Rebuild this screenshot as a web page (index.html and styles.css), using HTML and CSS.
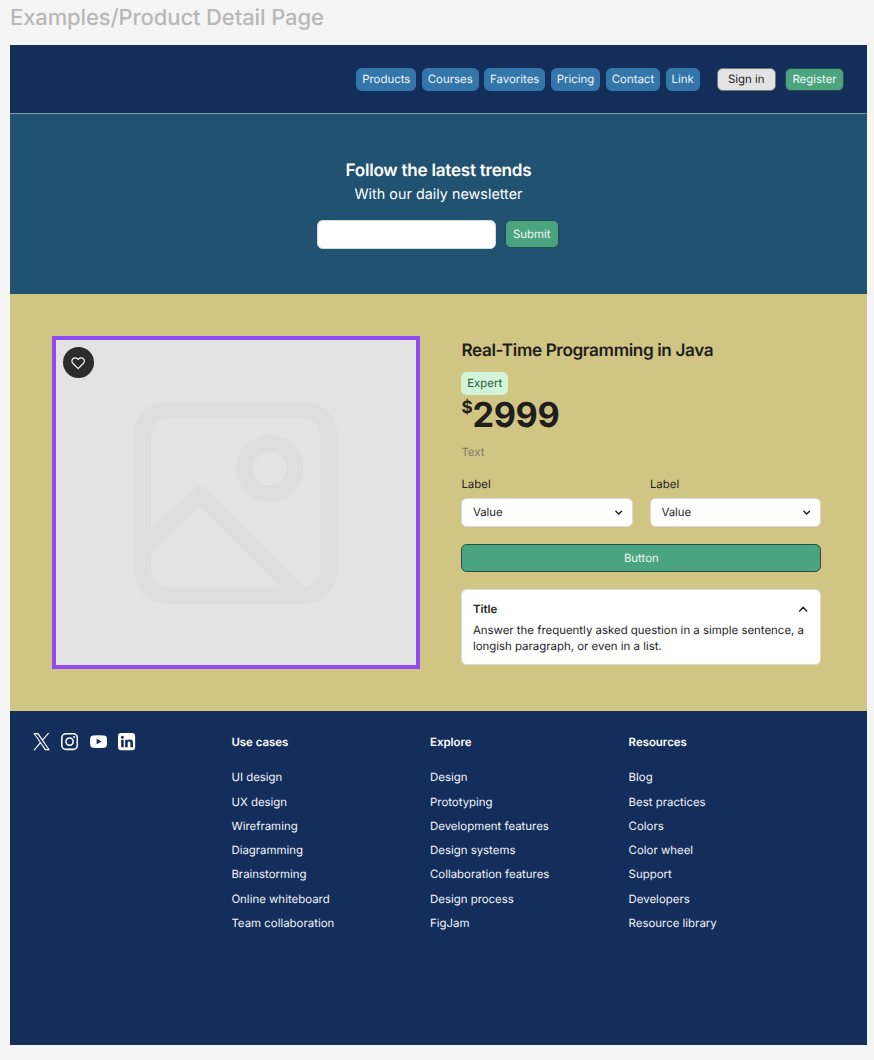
FILE: index.html
```html
<!DOCTYPE html>
<html lang="en">
<head>
<meta charset="utf-8">
<title>Product Detail Page</title>
<link rel="stylesheet" href="styles.css">
</head>
<body>
<div class="frame-name">Examples/Product Detail Page</div>
<div class="page">
  <header class="header">
    <nav class="nav">
      <a class="pill">Products</a><a class="pill">Courses</a><a class="pill">Favorites</a><a class="pill">Pricing</a><a class="pill">Contact</a><a class="pill">Link</a>
    </nav>
    <div class="auth">
      <button class="btn btn-neutral">Sign in</button>
      <button class="btn btn-green">Register</button>
    </div>
  </header>

  <section class="hero">
    <h1 class="hero-title">Follow the latest trends</h1>
    <p class="hero-sub">With our daily newsletter</p>
    <form class="signup">
      <input class="email" type="text" aria-label="Email">
      <button class="btn btn-submit" type="button">Submit</button>
    </form>
  </section>

  <main class="product">
    <div class="photo">
      <svg class="placeholder" viewBox="134 400.7 203.5 203.5" fill="none" stroke="#dedede" stroke-width="17" stroke-linejoin="round">
        <rect x="142.7" y="409.4" width="186" height="186" rx="25"/>
        <circle cx="269.5" cy="468.2" r="25.3"/>
        <path d="M142.7 549.3L199.7 494.2L300.9 595.4"/>
      </svg>
      <div class="like">
        <svg class="heart" viewBox="0 0 24 24" fill="none" stroke="#f5f5f5" stroke-width="2" stroke-linejoin="round" stroke-linecap="round"><path d="M20.84 4.61a5.5 5.5 0 0 0-7.78 0L12 5.67l-1.06-1.06a5.5 5.5 0 0 0-7.78 7.78l1.06 1.06L12 21.23l7.78-7.78 1.06-1.06a5.5 5.5 0 0 0 0-7.78z"/></svg>
      </div>
    </div>
    <div class="details">
      <h2 class="title">Real-Time Programming in Java</h2>
      <span class="tag">Expert</span>
      <div class="price"><span class="currency">$</span><span class="amount">2999</span></div>
      <p class="note">Text</p>
      <div class="fields">
        <div class="field">
          <span class="label">Label</span>
          <div class="select"><span>Value</span><svg class="chevron" viewBox="0 0 16 16"><path d="M4 6l4 4 4-4"/></svg></div>
        </div>
        <div class="field">
          <span class="label">Label</span>
          <div class="select"><span>Value</span><svg class="chevron" viewBox="0 0 16 16"><path d="M4 6l4 4 4-4"/></svg></div>
        </div>
      </div>
      <button class="btn btn-wide">Button</button>
      <div class="accordion">
        <div class="accordion-head"><span>Title</span><svg class="chevron-up" viewBox="0 0 20 20"><path d="M15 12.5l-5-5-5 5"/></svg></div>
        <p class="accordion-text">Answer the frequently asked question in a simple sentence, a<br>longish paragraph, or even in a list.</p>
      </div>
    </div>
  </main>

  <footer class="footer">
    <div class="social">
      <svg class="icon" viewBox="0 0 24 24" fill="#fff"><path d="M14.3 10.200L23 0h-2.100l-7.500 8.800L7.400 0H.4l9.100 13.300L.4 24h2.100l8-9.300L16.800 24h7zM11.500 13.500l-.9-1.300L3.200 1.600h3.200l5.900 8.500.9 1.300 7.700 11.100h-3.200z"/></svg>
      <svg class="icon" viewBox="0 0 24 24" fill="none" stroke="#fff" stroke-width="2.200"><rect x="1.100" y="1.100" width="21.800" height="21.800" rx="5.800"/><circle cx="12" cy="12" r="5.100"/><circle cx="18.400" cy="5.600" r="1.450" fill="#fff" stroke="none"/></svg>
      <svg class="icon" viewBox="0 0 24 24"><path fill="#fff" fill-rule="evenodd" d="M4 3.400Q12 2.900 20 3.400Q23.400 3.600 23.700 7.200Q24.200 12 23.700 16.800Q23.400 20.400 20 20.600Q12 21.100 4 20.600Q.6 20.400.3 16.800Q-.2 12 .3 7.200Q.6 3.600 4 3.400zM9.300 8.200v7.600L16.300 12z"/></svg>
      <svg class="icon" viewBox="0 0 24 24"><rect width="24" height="24" rx="4.500" fill="#fff"/><g fill="#142e5c"><circle cx="6.200" cy="6" r="2.100"/><path d="M4.400 9.300H8V20H4.400zM10 9.300h3.400v1.500c.6-1 1.800-1.800 3.400-1.800 3.400 0 4.200 2.200 4.200 5.200V20h-3.600v-5.200c0-1.400-.2-2.800-1.800-2.800-1.700 0-2 1.300-2 2.700V20H10z"/></g></svg>
    </div>
    <div class="links">
      <h3 class="links-title">Use cases</h3>
      <a>UI design</a><a>UX design</a><a>Wireframing</a><a>Diagramming</a><a>Brainstorming</a><a>Online whiteboard</a><a>Team collaboration</a>
    </div>
    <div class="links">
      <h3 class="links-title">Explore</h3>
      <a>Design</a><a>Prototyping</a><a>Development features</a><a>Design systems</a><a>Collaboration features</a><a>Design process</a><a>FigJam</a>
    </div>
    <div class="links">
      <h3 class="links-title">Resources</h3>
      <a>Blog</a><a>Best practices</a><a>Colors</a><a>Color wheel</a><a>Support</a><a>Developers</a><a>Resource library</a>
    </div>
  </footer>
</div>
</body>
</html>
```

FILE: styles.css
```css
* { box-sizing: border-box; }
body {
  margin: 0;
  height: 1060px;
  overflow: hidden;
  background: #f5f5f5;
  color: #1e1e1e;
  font-family: Inter, sans-serif;
  font-size: 11.43px;
  line-height: 16px;
  text-rendering: geometricPrecision;
}
h1, h2, h3, p { margin: 0; }
.frame-name {
  height: 45px;
  padding: 5px 0 0 10px;
  font-size: 22px;
  line-height: 27px;
  font-weight: 500;
  letter-spacing: -0.005em;
  color: #b8b8b8;
  white-space: nowrap;
}
.page { width: 857px; height: 1000px; margin-left: 10px; display: flex; flex-direction: column; }

.header {
  height: 68.7px;
  padding: 1px 23px 0 0;
  display: flex;
  justify-content: flex-end;
  align-items: center;
  gap: 17.1px;
  background: #142e5c;
  border-bottom: 1px solid #7f9bab;
}
.nav { display: flex; gap: 5.7px; }
.pill {
  height: 22.8px;
  padding: 0 5.85px;
  line-height: 23.4px;
  border-radius: 5.7px;
  background: #3376aa;
  color: #f0f5f9;
}
.auth { display: flex; gap: 9.3px; align-items: center; }
.btn {
  display: flex;
  align-items: center;
  justify-content: center;
  padding: 0;
  font: inherit;
  text-rendering: inherit;
  border: 1px solid #2c4a4a;
  border-radius: 5.7px;
  background: #4aa480;
  color: #eff8f4;
}
.btn-neutral { width: 59px; height: 23px; background: #e3e3e3; border-color: #767676; color: #1e1e1e; }
.btn-green { width: 59px; height: 22.5px; }

.hero {
  height: 180.3px;
  padding-top: 47px;
  display: flex;
  flex-direction: column;
  align-items: center;
  background: #225272;
  color: #fff;
}
.hero-title { font-size: 17.14px; line-height: 20.6px; font-weight: 600; letter-spacing: -0.015em; }
.hero-sub { margin-top: 4.4px; font-size: 14.29px; line-height: 17.1px; letter-spacing: 0.003em; }
.signup { display: flex; align-items: center; gap: 8.5px; margin: 17px 1px 0 0; }
.email { width: 179px; height: 29px; padding: 0 11px; border: 1px solid #d9d9d9; border-radius: 5.7px; background: #fff; font: inherit; }
.btn-submit { width: 54.5px; height: 28px; }

.product {
  height: 417.5px;
  padding: 42px 45.7px 0 41.7px;
  display: flex;
  align-items: flex-start;
  gap: 41.7px;
  background: #d0c582;
}
.photo {
  position: relative;
  width: 368px;
  height: 333px;
  flex: none;
  display: flex;
  align-items: center;
  justify-content: center;
  border: 4px solid #8f4cf6;
  background: #e3e3e3;
}
.placeholder { width: 203.5px; height: 203.5px; }
.like {
  position: absolute;
  left: 7px;
  top: 7px;
  width: 31.5px;
  height: 31.5px;
  display: flex;
  align-items: center;
  justify-content: center;
  border-radius: 50%;
  background: #2c2c2c;
}
.heart { width: 14.3px; height: 14.3px; }
.details { width: 360px; padding-top: 5.1px; display: flex; flex-direction: column; align-items: flex-start; }
.title { font-size: 17.14px; line-height: 20.6px; font-weight: 600; letter-spacing: -0.021em; }
.tag {
  margin-top: 10.3px;
  height: 22.9px;
  padding: 0 5.8px;
  line-height: 23.4px;
  border-radius: 5.7px;
  background: #d2f5d9;
  color: #245c36;
}
.price { height: 41.1px; display: flex; align-items: flex-start; font-weight: 700; }
.currency { font-size: 17.14px; line-height: 25px; }
.amount { font-size: 34.28px; line-height: 41.5px; letter-spacing: -0.012em; }
.note { margin-top: 7.7px; color: #817e70; }
.fields { margin-top: 16.7px; width: 100%; display: flex; gap: 17.1px; }
.field { flex: 1; }
.label { display: block; }
.select {
  margin-top: 5.7px;
  height: 28.6px;
  padding: 0 7.5px 0 10.5px;
  display: flex;
  align-items: center;
  justify-content: space-between;
  border: 1px solid #d9d9d9;
  border-radius: 5.7px;
  background: #fff;
}
.chevron { width: 11.4px; height: 11.4px; }
.chevron-up { width: 14.3px; height: 14.3px; }
.chevron path, .chevron-up path { fill: none; stroke: #1e1e1e; stroke-width: 2; stroke-linecap: round; stroke-linejoin: round; }
.btn-wide { margin-top: 17px; width: 100%; height: 28.6px; }
.accordion {
  margin-top: 17px;
  width: 100%;
  height: 75.6px;
  padding: 10.5px;
  border: 1px solid #d9d9d9;
  border-radius: 5.7px;
  background: #fff;
}
.accordion-head { display: flex; align-items: center; justify-content: space-between; font-weight: 600; }
.accordion-text { margin-top: 5.7px; white-space: nowrap; }

.footer {
  flex: 1;
  padding: 22.2px 0 0 22.8px;
  display: grid;
  grid-template-columns: repeat(4, 198.6px);
  align-items: start;
  background: #142e5c;
  color: #f2f4f7;
}
.social { margin-top: -0.3px; display: flex; gap: 11.43px; }
.icon { width: 17.14px; height: 17.14px; }
.links { display: flex; flex-direction: column; gap: 8.3px; white-space: nowrap; }
.links-title { margin-bottom: 11.3px; font-size: inherit; line-height: inherit; font-weight: 600; color: #fff; }
```
